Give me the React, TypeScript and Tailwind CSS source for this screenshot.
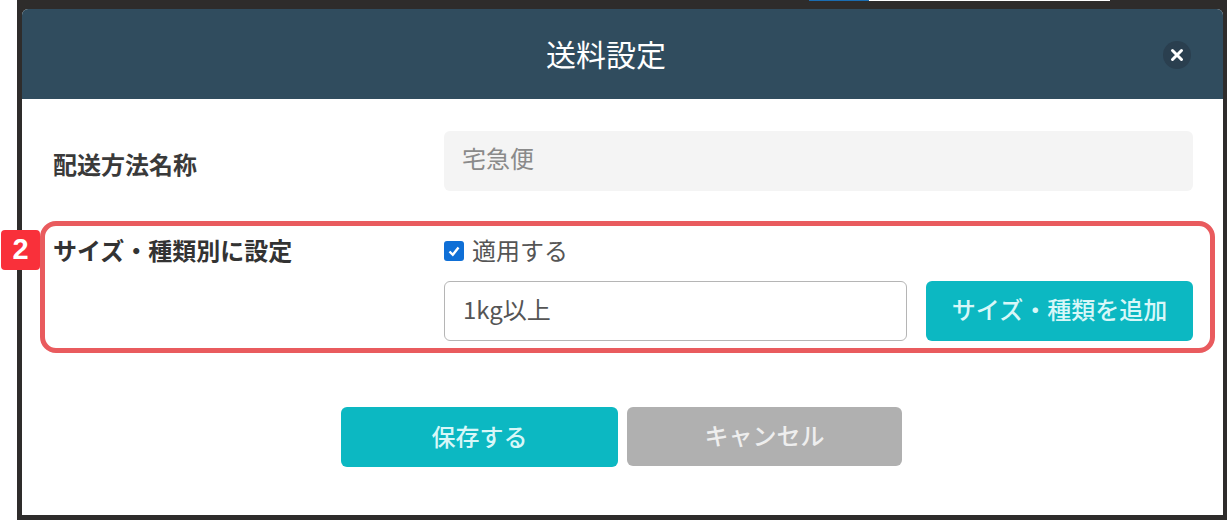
import React from "react";

export default function App() {
  return (
    <div className="w-[1227px] h-[520px] overflow-hidden flex bg-white font-['Noto_Sans_CJK_JP','Noto_Sans',sans-serif] text-[#333]">
      <div className="w-[17px] shrink-0 bg-white" />
      <div className="relative flex-1 bg-[#2e2c2b] pl-[5px] pr-[4px] pt-[9px] pb-[5px]">
        <div className="absolute left-[792px] top-0 h-px w-[60px] bg-[#1a6cb0]" />
        <div className="absolute left-[852px] top-0 h-px w-[241px] bg-white" />
        <div className="h-full bg-white rounded-t-[6px] flex flex-col">
          <header className="relative h-[90px] shrink-0 bg-[#304c5e] rounded-t-[6px] flex items-center justify-center text-white pr-[33px]">
            <h1 className="text-[30px] leading-none font-normal -mt-[3px]">送料設定</h1>
            <button className="absolute left-[1141px] top-[32px] w-7 h-7 rounded-full bg-[#2a3f4f] flex items-center justify-center">
              <svg width="14" height="14" viewBox="0 0 14 14">
                <path d="M2.5 2.5 L11.5 11.5 M11.5 2.5 L2.5 11.5" stroke="#fff" strokeWidth="3" strokeLinecap="round" />
              </svg>
            </button>
          </header>
          <main className="flex-1 pl-[31px] pr-[30px] pt-8">
            <div className="grid grid-cols-[391px_1fr] items-center">
              <label className="text-[24px] leading-none font-bold text-[#3a3a3a] mt-[5px]">配送方法名称</label>
              <div className="h-[60px] bg-[#f4f4f4] rounded-[6px] pl-[18px] flex items-center text-[24px] text-[#8a8a8a] pb-[6px]">宅急便</div>
            </div>
            <div className="relative mt-[50px] grid grid-cols-[391px_1fr]">
              <div className="absolute left-[-13px] right-[-22px] top-[-20px] bottom-[-12px] rounded-[16px] border-[5px] border-[#e95b5e] pointer-events-none" />
              <div className="absolute left-[-52px] top-[-11px] w-[39px] h-[40px] rounded-[4px] bg-[#f9303a] text-white font-['Liberation_Sans',sans-serif] font-bold text-[29px] flex items-center justify-center">2</div>
              <label className="text-[24px] leading-none font-bold text-[#333] -mt-[3px]">サイズ・種類別に設定</label>
              <div className="flex flex-col">
                <div className="h-[20px] flex items-center gap-2">
                  <span className="w-5 h-5 rounded-[3px] bg-[#0f6fd6] flex items-center justify-center">
                    <svg width="14" height="14" viewBox="0 0 14 14">
                      <path d="M2.5 7.5 L5.8 10.8 L11.5 3.5" fill="none" stroke="#fff" strokeWidth="2.4" />
                    </svg>
                  </span>
                  <span className="text-[24px] leading-none text-[#555] -mt-[2px]">適用する</span>
                </div>
                <div className="flex gap-[19px] mt-[20px]">
                  <div className="w-[463px] h-[60px] border border-[#b5b5b5] rounded-[6px] pl-[18px] flex items-center text-[24px] text-[#555] pb-[5px]">1kg以上</div>
                  <button className="flex-1 h-[60px] bg-[#0cb8c2] rounded-[6px] text-[#d8f7f8] text-[24px] font-medium flex items-center justify-center pb-[4px]">サイズ・種類を追加</button>
                </div>
              </div>
            </div>
            <div className="flex justify-center gap-[9px] mt-[66px] pr-[3px]">
              <button className="w-[277px] h-[60px] bg-[#0cb8c2] rounded-[6px] text-[#d8f7f8] text-[24px] font-medium flex items-center justify-center pb-[3px]">保存する</button>
              <button className="w-[275px] h-[59px] bg-[#b0b0b0] rounded-[6px] text-[#eeeeee] text-[24px] font-medium flex items-center justify-center pb-[3px]">キャンセル</button>
            </div>
          </main>
        </div>
      </div>
    </div>
  );
}
